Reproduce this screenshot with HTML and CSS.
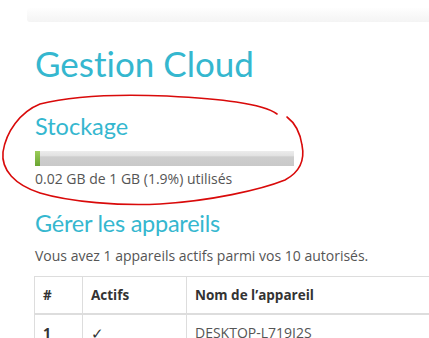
FILE: index.html
```html
<!DOCTYPE html>
<html lang="fr">
<head>
<meta charset="utf-8">
<title>Gestion Cloud</title>
<link rel="stylesheet" href="styles.css">
</head>
<body>
<div class="topbar"></div>
<main class="content">
  <h1 class="title">Gestion Cloud</h1>
  <h2 class="section storage">Stockage</h2>
  <div class="progress"><div class="progress-fill" style="width:1.9%"></div></div>
  <p class="usage">0.02 GB de 1 GB (1.9%) utilisés</p>
  <h2 class="section devices">Gérer les appareils</h2>
  <p class="info">Vous avez 1 appareils actifs parmi vos 10 autorisés.</p>
  <table class="devices-table">
    <thead>
      <tr><th class="c-num">#</th><th class="c-act">Actifs</th><th class="c-name">Nom de l’appareil</th></tr>
    </thead>
    <tbody>
      <tr><td class="bold">1</td><td class="check">✓</td><td>DESKTOP-L719I2S</td></tr>
    </tbody>
  </table>
</main>
<svg class="annotation" width="429" height="338" viewBox="0 0 429 338">
  <path d="M277,114 C262,103 220,99 167,96 C120,94 75,95 40,104 C20,112 6,132 3,152 C1,170 15,185 40,193 C70,202 120,206 160,204 C210,201 260,190 285,180 C300,172 305,160 302,145 C300,132 295,123 287,117" fill="none" stroke="#d90a0a" stroke-width="1.6" stroke-linecap="round"/>
</svg>
</body>
</html>
```
FILE: styles.css
```css
html, body {
  margin: 0;
  padding: 0;
  overflow: hidden;
  background: #fff;
}
body {
  font-family: "Open Sans", "Liberation Sans", sans-serif;
  font-size: 14px;
  color: #555;
  position: relative;
  width: 429px;
  height: 338px;
}
.topbar {
  margin: 8px 0 0 27px;
  height: 14px;
  background: linear-gradient(#fefefe, #f4f4f4);
  border-radius: 3px 0 0 3px;
}
.content {
  padding-left: 35px;
}
.title {
  font-family: Lato, "Open Sans", sans-serif;
  font-weight: 400;
  font-size: 35px;
  line-height: 42px;
  color: #35b7cf;
  margin: 20px 0 0;
  font-variant-ligatures: none;
  font-feature-settings: "liga" 0, "dlig" 0;
}
.section {
  font-family: Lato, "Open Sans", sans-serif;
  font-weight: 400;
  color: #35b7cf;
  font-variant-ligatures: none;
}
.storage {
  font-size: 23.5px;
  line-height: 28px;
  margin: 28px 0 0;
}
.progress {
  margin-top: 11px;
  width: 259px;
  height: 15px;
  background: linear-gradient(#ececec 0%, #e2e2e2 30%, #cdcdcd 40%, #c9c9c9 100%);
}
.progress-fill {
  height: 100%;
  background: linear-gradient(#9ccc5a, #6aa532);
}
.usage {
  margin: 3px 0 0;
  line-height: 19px;
}
.devices {
  font-size: 23.5px;
  line-height: 28px;
  letter-spacing: -0.25px;
  margin: 21px 0 0;
}
.info {
  margin: 9px 0 0;
  line-height: 19px;
}
.devices-table {
  margin: 11px 0 0 -1px;
  border-collapse: collapse;
  width: 560px;
  border: 1px solid #ddd;
}
.devices-table th,
.devices-table td {
  border: 1px solid #ddd;
  padding: 8px;
  line-height: 20px;
  text-align: left;
  vertical-align: top;
}
.devices-table th {
  font-size: 13.5px;
  font-weight: 700;
  color: #333;
  border-bottom: 2px solid #ddd;
}
.c-num { width: 31px; }
.c-act { width: 87px; }
.bold { font-weight: 700; color: #333; }
.check { font-size: 15px; color: #333; }
.annotation {
  position: absolute;
  left: 0;
  top: 0;
  pointer-events: none;
}
```
